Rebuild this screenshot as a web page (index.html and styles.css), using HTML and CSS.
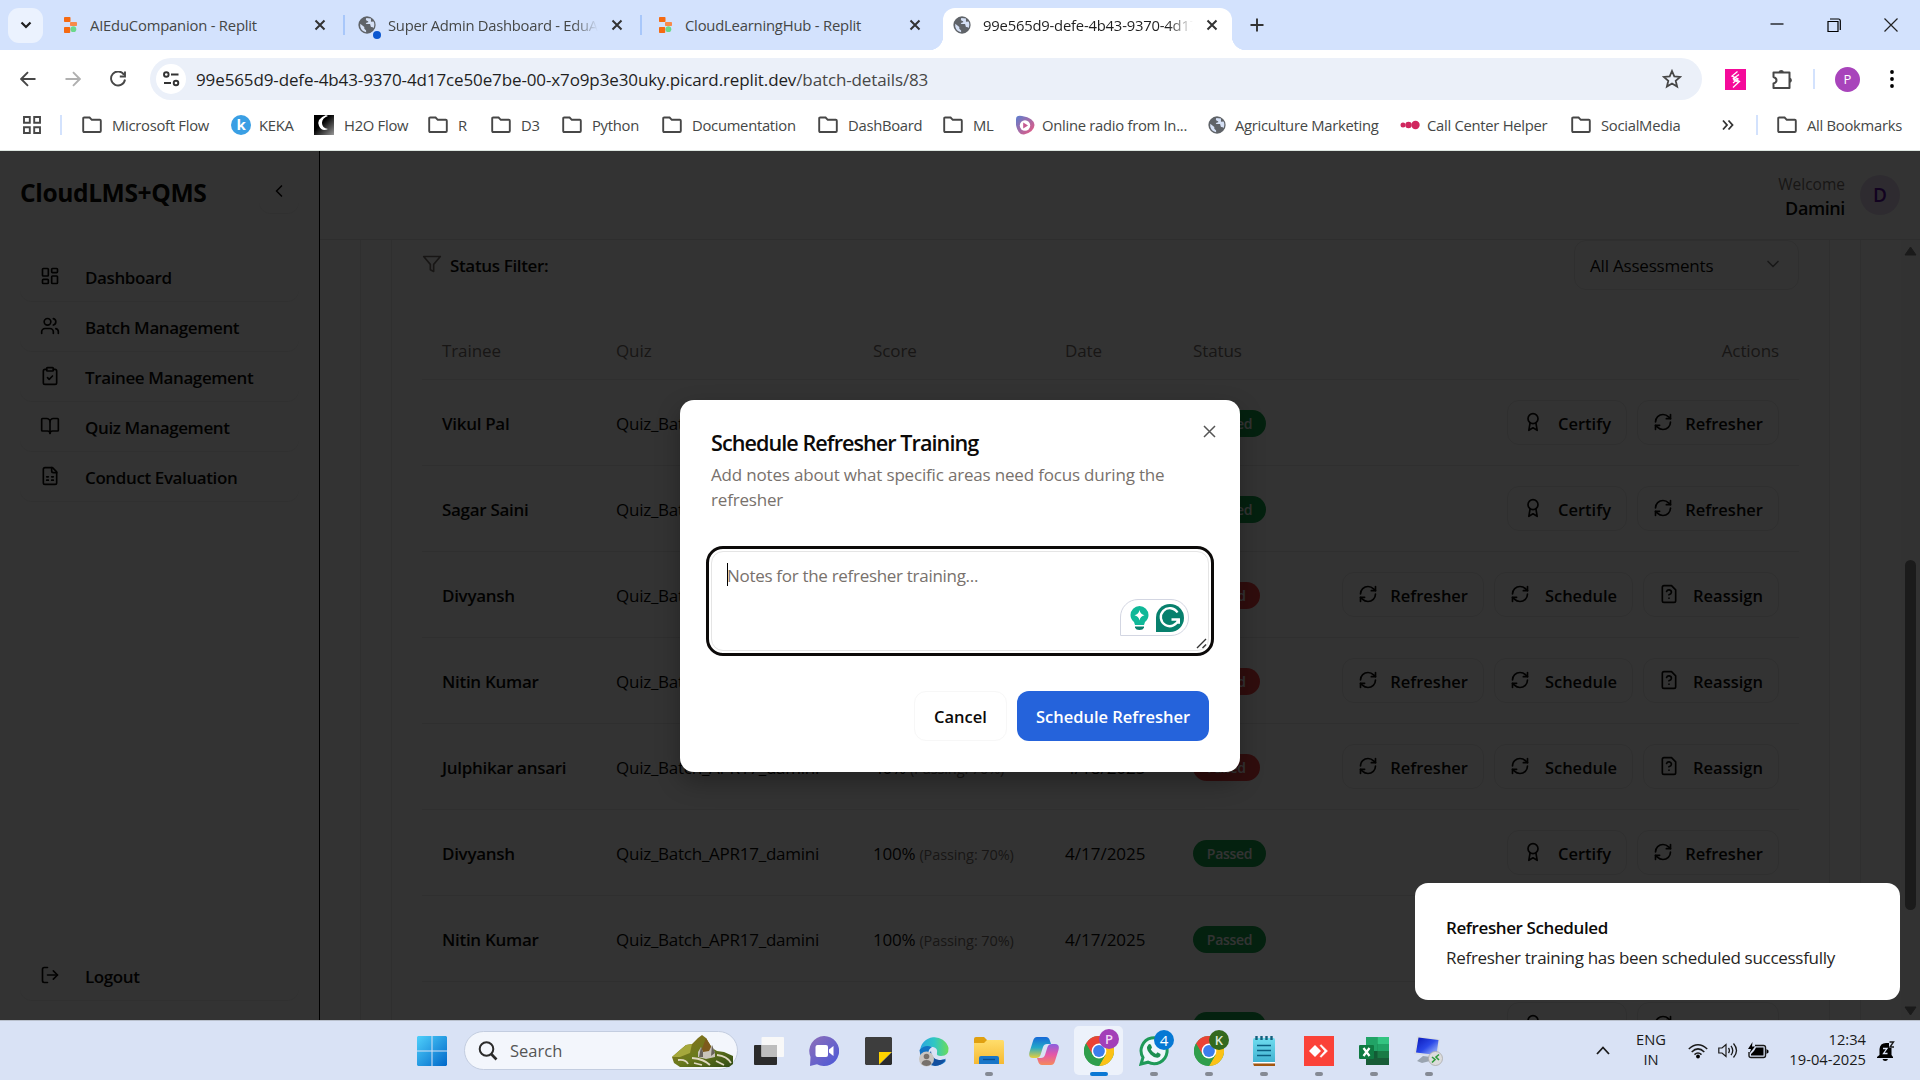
FILE: index.html
```html
<!DOCTYPE html>
<html lang="en">
<head>
<meta charset="utf-8">
<title>CloudLMS+QMS</title>
<link rel="stylesheet" href="styles.css">
</head>
<body>
<svg class="defs" width="0" height="0">
  <defs>
    <linearGradient id="gWin" x1="0" y1="0" x2="1" y2="1"><stop offset="0" stop-color="#4fd0fb"/><stop offset="1" stop-color="#0067c9"/></linearGradient>
    <linearGradient id="gChat" x1="0" y1="0" x2="1" y2="1"><stop offset="0" stop-color="#8f6fb8"/><stop offset="1" stop-color="#4a58d8"/></linearGradient>
    <linearGradient id="gEdge" x1="0" y1="0" x2="1" y2="0"><stop offset="0" stop-color="#2aa5e0"/><stop offset=".5" stop-color="#2fc6c4"/><stop offset="1" stop-color="#6bdc5a"/></linearGradient>
    <linearGradient id="gCoA" x1="0" y1="0" x2="0" y2="1"><stop offset="0" stop-color="#1668d8"/><stop offset=".5" stop-color="#24a8c8"/><stop offset="1" stop-color="#e8cf3a"/></linearGradient>
    <linearGradient id="gCoB" x1="0" y1="0" x2="0" y2="1"><stop offset="0" stop-color="#8a5ee0"/><stop offset=".5" stop-color="#e457a8"/><stop offset="1" stop-color="#f58a5c"/></linearGradient>
    <linearGradient id="gFold" x1="0" y1="0" x2="0" y2="1"><stop offset="0" stop-color="#ffdd6b"/><stop offset="1" stop-color="#f6b932"/></linearGradient>
    <linearGradient id="gNote" x1="0" y1="0" x2="0" y2="1"><stop offset="0" stop-color="#6fdcef"/><stop offset="1" stop-color="#3fb1d0"/></linearGradient>
    <linearGradient id="gRadio" x1="0" y1="0" x2="1" y2="1"><stop offset="0" stop-color="#5a7fd0"/><stop offset="1" stop-color="#f2567c"/></linearGradient>
    <linearGradient id="gScr" x1="0" y1="0" x2="1" y2="1"><stop offset="0" stop-color="#0a18b8"/><stop offset=".5" stop-color="#2a48e8"/><stop offset="1" stop-color="#b8d0fa"/></linearGradient>
    <linearGradient id="gHill" x1="0" y1="0" x2="1" y2="1"><stop offset="0" stop-color="#8f6a1e"/><stop offset=".5" stop-color="#6b7a1c"/><stop offset="1" stop-color="#2f4a14"/></linearGradient>
    <linearGradient id="gH2o" x1="0" y1="0" x2="1" y2="1"><stop offset=".4" stop-color="#000"/><stop offset="1" stop-color="#999"/></linearGradient>
  </defs>
  <symbol id="folder" viewBox="0 0 20 18"><path d="M1.2 2.5Q1.2 1.5 2.2 1.5H7.6L9.8 3.8H17.8Q18.8 3.8 18.8 4.8V15Q18.8 16 17.8 16H2.2Q1.2 16 1.2 15Z" fill="none" stroke="#474747" stroke-width="1.9"/></symbol>
  <symbol id="globe" viewBox="0 0 20 20"><circle cx="10" cy="10" r="9.6" fill="#5f6368"/><path d="M2.5 8.5 7 12.2V14.2L9 16.2V18Q4 17.4 2.5 12Z" fill="#d5e0f5"/><path d="M9.2 2.2Q8 4.2 9.6 5.2 12 5.4 11.4 7 9 7 8.6 9H13.4L14.4 12.2Q16.4 12 17.4 13.4 19 9 17.2 6.2L14.4 6.4V2.8Z" fill="#d5e0f5"/></symbol>
  <symbol id="replit" viewBox="0 0 13 16"><rect width="6.5" height="5" rx=".8" fill="#f56a12"/><rect x="6" y="5" width="7" height="4" rx=".8" fill="#f88a4a"/><rect y="10" width="6.2" height="6" rx=".8" fill="#f56a12"/><circle cx="9.4" cy="12.2" r="2.9" fill="#6bd88c"/></symbol>
  <symbol id="x" viewBox="0 0 12 12"><path d="M1.5 1.5 10.5 10.5M10.5 1.5 1.5 10.5" stroke="currentColor" stroke-width="2" fill="none"/></symbol>
  <symbol id="chrome" viewBox="0 0 30 30"><circle cx="15" cy="15" r="15" fill="#34a853"/><path d="M15 15 2 7.5A15 15 0 0 1 28 7.5H15Z" fill="#ea4335"/><path d="M28 7.5A15 15 0 0 1 15 30L21.5 18.7 15 7.5Z" fill="#fbc116"/><path d="M2 7.5 8.5 18.8 15 15V7.5Z" fill="#ea4335"/><path d="M2 7.5A15 15 0 0 0 15 30L21.5 18.7H8.5Z" fill="#2f9e4c"/><circle cx="15" cy="15" r="7.4" fill="#fff"/><circle cx="15" cy="15" r="5.9" fill="#3b7ded"/></symbol>
  <symbol id="refresh" viewBox="0 0 24 24"><path d="M3 12a9 9 0 0 1 9-9 9.750 9.750 0 0 1 6.740 2.740L21 8"/><path d="M21 3v5h-5"/><path d="M21 12a9 9 0 0 1-9 9 9.750 9.750 0 0 1-6.740-2.740L3 16"/><path d="M8 16H3v5"/></symbol>
  <symbol id="award" viewBox="0 0 24 24"><circle cx="12" cy="8" r="6"/><path d="M15.480 12.890 17 22l-5-3-5 3 1.520-9.110"/></symbol>
  <symbol id="fileq" viewBox="0 0 24 24"><path d="M15 2H6a2 2 0 0 0-2 2v16a2 2 0 0 0 2 2h12a2 2 0 0 0 2-2V7Z"/><path d="M9.100 9a3 3 0 0 1 5.820 1c0 2-3 3-3 3"/><path d="M12 17h.01"/></symbol>
</svg>

<header class="browser">
  <div class="tabs">
    <div class="tabsearch"><svg width="12" height="8" viewBox="0 0 12 8"><path d="M1.500 1.500 6 6 10.500 1.500" stroke="#1f1f1f" stroke-width="2.200" fill="none"/></svg></div>
    <div class="tab t1"><svg class="rep"><use href="#replit"/></svg><span>AIEduCompanion - Replit</span><svg class="cx"><use href="#x"/></svg></div>
    <i class="tsep"></i>
    <div class="tab t2"><svg class="glo"><use href="#globe"/></svg><b class="dot"></b><span class="fade">Super Admin Dashboard - EduAI</span><svg class="cx"><use href="#x"/></svg></div>
    <i class="tsep"></i>
    <div class="tab t3"><svg class="rep"><use href="#replit"/></svg><span>CloudLearningHub - Replit</span><svg class="cx"><use href="#x"/></svg></div>
    <div class="tab active"><svg class="glo"><use href="#globe"/></svg><span class="fade">99e565d9-defe-4b43-9370-4d17c</span><svg class="cx"><use href="#x"/></svg></div>
    <svg class="plus" width="14" height="14" viewBox="0 0 14 14"><path d="M7 .5V13.500M.5 7H13.500" stroke="#333" stroke-width="1.900"/></svg>
    <div class="win">
      <svg width="14" height="14" viewBox="0 0 14 14"><path d="M.5 6H13.500" stroke="#000" stroke-width="1.200"/></svg>
      <svg width="14" height="14" viewBox="0 0 14 14"><path d="M1 3.500H11V13.500H1ZM3 1H11.500Q13.300 1 13.300 3V12" stroke="#000" stroke-width="1.200" fill="none"/></svg>
      <svg width="14" height="14" viewBox="0 0 14 14"><path d="M.5 .5 13.500 13.500M13.500 .5 .5 13.500" stroke="#222" stroke-width="1.200"/></svg>
    </div>
  </div>
  <div class="toolbar">
    <svg class="nv" width="16" height="16" viewBox="0 0 16 16"><path d="M15.500 8H1.500M8 1.200 1.200 8 8 14.800" stroke="#474747" stroke-width="1.900" fill="none"/></svg>
    <svg class="nv" width="16" height="16" viewBox="0 0 16 16"><path d="M.5 8H14.500M8 1.200 14.800 8 8 14.800" stroke="#b0b0b0" stroke-width="1.900" fill="none"/></svg>
    <svg class="nv" width="16" height="16" viewBox="0 0 16 16"><path d="M14 3.700A7 7 0 1 0 15 8.500M15 .5V5.500H9.800" stroke="#474747" stroke-width="1.900" fill="none"/></svg>
    <div class="omni">
      <div class="site"><svg width="17" height="16" viewBox="0 0 17 16"><circle cx="3.300" cy="3.500" r="2.300"/><path d="M8 3.500H15.500M1 12H8"/><circle cx="13" cy="12" r="2.300"/></svg></div>
      <div class="url">99e565d9-defe-4b43-9370-4d17ce50e7be-00-x7o9p3e30uky.picard.replit.dev<em>/batch-details/83</em></div>
      <svg class="star" width="20" height="20" viewBox="0 0 20 20"><path d="M10 2 12.300 7.400 18.200 7.900 13.700 11.800 15.100 17.600 10 14.500 4.900 17.600 6.300 11.800 1.800 7.900 7.700 7.400Z" fill="none" stroke="#474747" stroke-width="1.800"/></svg>
    </div>
    <svg class="ext" width="21" height="21" viewBox="0 0 21 21"><rect width="21" height="21" fill="#f50a9a"/><path d="M12.500 2.500 7 7 13 10 8 14M14 5.500 8.500 9.500 14.500 12.500 8 18.500M8 10.500 13.500 13.500" fill="none" stroke="#fff" stroke-width="1.300"/></svg>
    <svg class="puz" width="22" height="22" viewBox="0 0 22 22"><path d="M2.500 4.500H18.500V20H2.500V15.500Q5.500 14.500 5.500 12.200 5.500 10 2.500 9Z" fill="none" stroke="#474747" stroke-width="2" stroke-linejoin="round"/><path d="M7.500 4.500A2.800 3 0 0 1 13 4.500ZM18.500 9.500A3 2.800 0 0 1 18.500 15Z" fill="#474747"/></svg>
    <i class="vsep"></i>
    <div class="avatar">P</div>
    <svg class="dots" width="6" height="20" viewBox="0 0 6 20"><circle cx="3" cy="3" r="1.900"/><circle cx="3" cy="10" r="1.900"/><circle cx="3" cy="17" r="1.900"/></svg>
  </div>
  <nav class="marks">
    <svg width="18" height="18" viewBox="0 0 18 18"><path d="M1 1H6.800V6.800H1ZM11.200 1H17V6.800H11.200ZM1 11.200H6.800V17H1ZM11.200 11.200H17V17H11.200Z" fill="none" stroke="#474747" stroke-width="1.900"/></svg>
    <i class="vsep"></i>
    <a><svg><use href="#folder"/></svg>Microsoft Flow</a>
    <a class="keka"><b>k</b>KEKA</a>
    <a><svg viewBox="0 0 20 20"><rect width="20" height="20" fill="url(#gH2o)"/><path d="M12 0Q2 4 5 11 8 17 14 14 8 13 8 8 8 3 14 1Z" fill="#fff"/></svg>H2O Flow</a>
    <a><svg><use href="#folder"/></svg>R</a>
    <a><svg><use href="#folder"/></svg>D3</a>
    <a><svg><use href="#folder"/></svg>Python</a>
    <a><svg><use href="#folder"/></svg>Documentation</a>
    <a><svg><use href="#folder"/></svg>DashBoard</a>
    <a><svg><use href="#folder"/></svg>ML</a>
    <a class="near"><svg viewBox="0 0 20 20"><path d="M1 4Q1 0 7 1 19 3 19.500 10 19 17 9 19.500 3 20 1 10Z" fill="url(#gRadio)"/><circle cx="10" cy="10.500" r="5.200" fill="#fff"/><path d="M8.200 7.500 13 10.500 8.200 13.500Z" fill="#c55a92"/></svg>Online radio from In...</a>
    <a class="near"><svg class="g18"><use href="#globe"/></svg>Agriculture Marketing</a>
    <a class="near"><svg viewBox="0 0 20 20"><circle cx="3" cy="10" r="2.500" fill="#d0265e"/><circle cx="8.500" cy="10" r="3.200" fill="#d0265e"/><circle cx="15.500" cy="10" r="4.200" fill="#d0265e"/></svg>Call Center Helper</a>
    <a><svg><use href="#folder"/></svg>SocialMedia</a>
    <svg width="12" height="12" viewBox="0 0 12 12"><path d="M1 1.500 5 6 1 10.500M6.500 1.500 10.500 6 6.500 10.500" fill="none" stroke="#333" stroke-width="1.800"/></svg>
    <i class="vsep"></i>
    <a><svg><use href="#folder"/></svg>All Bookmarks</a>
  </nav>
</header>

<div class="app">
  <aside class="side">
    <div class="brand"><h1>CloudLMS+QMS</h1><button class="fold"><svg class="lu" viewBox="0 0 24 24"><path d="m15 18-6-6 6-6"/></svg></button></div>
    <nav class="menu">
      <a><svg class="lu" viewBox="0 0 24 24"><rect width="7" height="9" x="3" y="3" rx="1"/><rect width="7" height="5" x="14" y="3" rx="1"/><rect width="7" height="9" x="14" y="12" rx="1"/><rect width="7" height="5" x="3" y="16" rx="1"/></svg>Dashboard</a>
      <a><svg class="lu" viewBox="0 0 24 24"><path d="M16 21v-2a4 4 0 0 0-4-4H6a4 4 0 0 0-4 4v2"/><circle cx="9" cy="7" r="4"/><path d="M22 21v-2a4 4 0 0 0-3-3.870"/><path d="M16 3.130a4 4 0 0 1 0 7.750"/></svg>Batch Management</a>
      <a><svg class="lu" viewBox="0 0 24 24"><rect width="8" height="4" x="8" y="2" rx="1"/><path d="M16 4h2a2 2 0 0 1 2 2v14a2 2 0 0 1-2 2H6a2 2 0 0 1-2-2V6a2 2 0 0 1 2-2h2"/><path d="m9 14 2 2 4-4"/></svg>Trainee Management</a>
      <a><svg class="lu" viewBox="0 0 24 24"><path d="M12 7v14"/><path d="M3 18a1 1 0 0 1-1-1V4a1 1 0 0 1 1-1h5a4 4 0 0 1 4 4 4 4 0 0 1 4-4h5a1 1 0 0 1 1 1v13a1 1 0 0 1-1 1h-6a3 3 0 0 0-3 3 3 3 0 0 0-3-3z"/></svg>Quiz Management</a>
      <a><svg class="lu" viewBox="0 0 24 24"><path d="M15 2H6a2 2 0 0 0-2 2v16a2 2 0 0 0 2 2h12a2 2 0 0 0 2-2V7Z"/><path d="M14 2v4a2 2 0 0 0 2 2h4"/><path d="M8 13h2M14 13h2M8 17h2M14 17h2"/></svg>Conduct Evaluation</a>
    </nav>
    <nav class="menu out"><a><svg class="lu" viewBox="0 0 24 24"><path d="M9 21H5a2 2 0 0 1-2-2V5a2 2 0 0 1 2-2h4"/><path d="m16 17 5-5-5-5"/><path d="M21 12H9"/></svg>Logout</a></nav>
  </aside>
  <section class="main">
    <div class="top"><div class="who"><small>Welcome</small><strong>Damini</strong></div><div class="me">D</div></div>
    <div class="scroll">
      <div class="outer"><div class="inner">
        <div class="filter"><svg class="lu mut" viewBox="0 0 24 24"><path d="M22 3H2l8 9.460V19l4 2v-8.540z"/></svg><span>Status Filter:</span><div class="select">All Assessments<svg class="lu" viewBox="0 0 24 24"><path d="m6 9 6 6 6-6"/></svg></div></div>
        <div class="row head"><span>Trainee</span><span>Quiz</span><span>Score</span><span>Date</span><span>Status</span><span class="end">Actions</span></div>
        <div class="row"><b>Vikul Pal</b><span>Quiz_Batch_APR17_damini</span><span>100% <small>(Passing: 70%)</small></span><span class="date">4/17/2025</span><span><i class="pill ok">Passed</i></span><div class="acts"><button class="cert"><svg class="lu"><use href="#award"/></svg>Certify</button><button class="refr"><svg class="lu"><use href="#refresh"/></svg>Refresher</button></div></div>
        <div class="row"><b>Sagar Saini</b><span>Quiz_Batch_APR17_damini</span><span>100% <small>(Passing: 70%)</small></span><span class="date">4/17/2025</span><span><i class="pill ok">Passed</i></span><div class="acts"><button class="cert"><svg class="lu"><use href="#award"/></svg>Certify</button><button class="refr"><svg class="lu"><use href="#refresh"/></svg>Refresher</button></div></div>
        <div class="row"><b>Divyansh</b><span>Quiz_Batch_APR17_damini</span><span>40% <small>(Passing: 70%)</small></span><span class="date">4/18/2025</span><span><i class="pill bad">Failed</i></span><div class="acts"><button class="refr"><svg class="lu"><use href="#refresh"/></svg>Refresher</button><button class="sch"><svg class="lu"><use href="#refresh"/></svg>Schedule</button><button class="rea"><svg class="lu"><use href="#fileq"/></svg>Reassign</button></div></div>
        <div class="row"><b>Nitin Kumar</b><span>Quiz_Batch_APR17_damini</span><span>40% <small>(Passing: 70%)</small></span><span class="date">4/18/2025</span><span><i class="pill bad">Failed</i></span><div class="acts"><button class="refr"><svg class="lu"><use href="#refresh"/></svg>Refresher</button><button class="sch"><svg class="lu"><use href="#refresh"/></svg>Schedule</button><button class="rea"><svg class="lu"><use href="#fileq"/></svg>Reassign</button></div></div>
        <div class="row"><b>Julphikar ansari</b><span>Quiz_Batch_APR17_damini</span><span>40% <small>(Passing: 70%)</small></span><span class="date">4/18/2025</span><span><i class="pill bad">Failed</i></span><div class="acts"><button class="refr"><svg class="lu"><use href="#refresh"/></svg>Refresher</button><button class="sch"><svg class="lu"><use href="#refresh"/></svg>Schedule</button><button class="rea"><svg class="lu"><use href="#fileq"/></svg>Reassign</button></div></div>
        <div class="row"><b>Divyansh</b><span>Quiz_Batch_APR17_damini</span><span>100% <small>(Passing: 70%)</small></span><span class="date">4/17/2025</span><span><i class="pill ok">Passed</i></span><div class="acts"><button class="cert"><svg class="lu"><use href="#award"/></svg>Certify</button><button class="refr"><svg class="lu"><use href="#refresh"/></svg>Refresher</button></div></div>
        <div class="row"><b>Nitin Kumar</b><span>Quiz_Batch_APR17_damini</span><span>100% <small>(Passing: 70%)</small></span><span class="date">4/17/2025</span><span><i class="pill ok">Passed</i></span><div class="acts"><button class="cert"><svg class="lu"><use href="#award"/></svg>Certify</button><button class="refr"><svg class="lu"><use href="#refresh"/></svg>Refresher</button></div></div>
        <div class="row"><b>Julphikar ansari</b><span>Quiz_Batch_APR17_damini</span><span>100% <small>(Passing: 70%)</small></span><span class="date">4/17/2025</span><span><i class="pill ok">Passed</i></span><div class="acts"><button class="cert"><svg class="lu"><use href="#award"/></svg>Certify</button><button class="refr"><svg class="lu"><use href="#refresh"/></svg>Refresher</button></div></div>
      </div></div>
      <div class="bar"><svg width="13" height="10" viewBox="0 0 13 10"><path d="M6.500 1 12 9H1Z" fill="#808080" stroke="#808080" stroke-linejoin="round"/></svg><i></i><svg width="13" height="10" viewBox="0 0 13 10"><path d="M6.500 9 12 1H1Z" fill="#808080" stroke="#808080" stroke-linejoin="round"/></svg></div>
    </div>
  </section>

  <div class="overlay"></div>
  <div class="modal">
    <svg class="close" width="13" height="13" viewBox="0 0 13 13"><path d="M1 1 12 12M12 1 1 12" stroke="#555" stroke-width="1.500"/></svg>
    <h2>Schedule Refresher Training</h2>
    <p>Add notes about what specific areas need focus during the<br>refresher</p>
    <div class="area"><i class="caret"></i><span>Notes for the refresher training...</span>
      <div class="gram">
        <svg width="19" height="24" viewBox="0 0 19 24"><path d="M9.500 0A9 9 0 0 1 18.500 9Q18.500 13 15 16L14 19H5L4 16Q.5 13 .5 9A9 9 0 0 1 9.500 0Z" fill="#0fb898"/><path d="M5 20.500H14V21.500Q13 24 9.500 24 6 24 5 21.500Z" fill="#0a7f6c"/><path d="M9.500 4Q10.300 8.400 14.500 9.200 10.300 10 9.500 14.500 8.700 10 4.500 9.200 8.700 8.400 9.500 4Z" fill="#fff"/></svg>
        <svg width="28" height="28" viewBox="0 0 28 28"><path d="M14 0A14 14 0 0 1 14 28H0V14A14 14 0 0 1 14 0Z" fill="#07806d"/><path d="M21.500 8.500A9 9 0 1 0 22.500 15.500H15.500M22.800 15V19.800" fill="none" stroke="#fff" stroke-width="2.400"/></svg>
      </div>
      <svg class="grip" width="11" height="11" viewBox="0 0 11 11"><path d="M1 10 10 1M6.500 10 10 6.500" stroke="#333" stroke-width="1.400"/></svg>
    </div>
    <div class="foot"><button class="cancel">Cancel</button><button class="go">Schedule Refresher</button></div>
  </div>
  <div class="toast"><strong>Refresher Scheduled</strong><span>Refresher training has been scheduled successfully</span></div>
</div>

<footer class="task">
  <div class="cell"><svg width="30" height="30" viewBox="0 0 30 30"><path d="M1 0H14.500V14.500H0V1ZM15.500 0H29L30 1V14.500H15.500ZM0 15.500H14.500V30H1L0 29ZM15.500 15.500H30V29L29 30H15.500Z" fill="url(#gWin)"/></svg></div>
  <div class="find"><svg width="20" height="20" viewBox="0 0 20 20"><circle cx="8.500" cy="8" r="6.800" fill="none" stroke="#2b2b2b" stroke-width="2"/><path d="M13.200 13 18.500 18.500" stroke="#2b2b2b" stroke-width="2.600"/></svg><span>Search</span>
    <svg class="land" width="62" height="32" viewBox="0 0 62 32"><path d="M2 28 0 22 8 15 14 10 20 9 26 3 30 0 34 3 40 13 45 16 52 17 61 21V29L57 32H8Z" fill="url(#gHill)"/><path d="M14 10 20 9 18 18 8 22 0 22 8 15Z" fill="#a5a83c"/><path d="M34 3 40 13 36 21 28 19Z" fill="#7d5a1c"/><path d="M26 22V17L29 12 31 17 37 16 40 10 43 18V22L34 24Z" fill="#c9c4ba"/><path d="M29 12 31 17V22L27 22ZM40 10 43 18 39 21Z" fill="#68635c"/><path d="M6 25Q14 24 16 29M20 23Q32 24 38 30M45 20Q55 21 59 28M22 28 30 30M44 26 52 30" stroke="#dfd8c0" stroke-width="1.800" fill="none"/></svg></div>
  <div class="cell first"><svg width="30" height="28" viewBox="0 0 30 28"><rect y="8" width="23" height="20" rx="1" fill="#2b2b2b"/><rect x="7.500" width="22.500" height="20" rx="1" fill="#f8f8f8"/><rect x="7.500" y="8" width="15.500" height="12" fill="#bdbdbd"/></svg></div>
  <div class="cell"><svg width="30" height="30" viewBox="0 0 30 30"><path d="M15 0A15 15 0 1 1 8 28.200L1 30 1.500 21A15 15 0 0 1 15 0Z" fill="url(#gChat)"/><rect x="6.500" y="9" width="12.500" height="12" rx="2" fill="#fff"/><path d="M20 13.500 24.500 10V20L20 16.500Z" fill="#fff"/></svg></div>
  <div class="cell"><svg width="27" height="28" viewBox="0 0 27 28"><path d="M1 0H26L27 1V14.500L14 28H1L0 27V1Z" fill="#3d3d3d"/><path d="M14 15H27L14 27.500Z" fill="#ffd400"/><path d="M27 15V27L26 28H14Z" fill="#2b2b2b"/></svg></div>
  <div class="cell"><svg width="32" height="32" viewBox="0 0 32 32"><path d="M2 16A14.500 14.500 0 0 1 30.500 13Q31 21 23 21 18 21 19 18 20 13 15 12 6 11 2 16Z" fill="url(#gEdge)"/><path d="M1.500 15Q7 9 14 12 9 15 11 21 14 28 25 24.500 29 24 27 27 20 33 11 29.500 2 26 1.500 15Z" fill="#1273c4"/><path d="M13 16Q13 24 21 25 26 25 28 23.500 25 30 17 31 10 29 10.500 20Z" fill="#124f9e"/><circle cx="8.500" cy="24" r="7.500" fill="#c9c5c1"/><circle cx="8.500" cy="21.500" r="2.800" fill="#77716c"/><path d="M3.500 29Q4 25 8.500 25T13.500 29Q8.500 33 3.500 29Z" fill="#77716c"/></svg></div>
  <div class="cell run"><svg width="30" height="27" viewBox="0 0 30 27"><path d="M0 2Q0 0 2 0H10L13 3V8H0Z" fill="#e0a010"/><path d="M0 6 10 6 13 3H28.500Q30 3 30 5V27H0Z" fill="url(#gFold)"/><path d="M5 27V21Q5 19 7 19H23Q25 19 25 21V27Z" fill="#1976c8"/><path d="M9 22.500H21" stroke="#0b4f90" stroke-width="1.300"/></svg></div>
  <div class="cell"><svg width="30" height="28" viewBox="0 0 30 28"><path d="M8 0H17Q20 0 21 4L22 7H18Q15 7 14 10L11.500 18Q10.500 21 7 21H4Q-1 21 .5 15L4 4Q5 0 8 0Z" fill="url(#gCoA)"/><path d="M22 28H13Q10 28 9 24L8 21H12Q15 21 16 18L18.500 10Q19.500 7 23 7H26Q31 7 29.500 13L26 24Q25 28 22 28Z" fill="url(#gCoB)"/></svg></div>
  <div class="cell run on"><svg width="30" height="30"><use href="#chrome"/></svg><b class="bdg">P</b></div>
  <div class="cell run"><svg width="30" height="30" viewBox="0 0 30 30"><path d="M2 28 4 21.500A13 13 0 1 1 9 26.200Z" fill="#eef6fb" stroke="#1f9a58" stroke-width="3"/><path d="M9.500 8.500Q11 7.500 12 9L13 11.500 11.800 13.500Q13.500 16.500 17 18L18.500 16.300 21.500 18Q22 21 18.500 21.800 15 22 11.500 18.500 7.500 14 8 11Z" fill="#1b8f50"/></svg><b class="bdg four">4</b></div>
  <div class="cell run"><svg width="30" height="30"><use href="#chrome"/></svg><b class="bdg kk">K</b></div>
  <div class="cell run"><svg width="22" height="30" viewBox="0 0 22 30"><rect y="2" width="22" height="25" rx="1.500" fill="url(#gNote)"/><path d="M0 26H22V27.500H0Z" fill="#fff"/><path d="M0 27.500H22V30H1Z" fill="#a3560f"/><path d="M4 9.500H18M4 14.500H18M4 19.500H18" stroke="#0c5f82" stroke-width="1.600"/><path d="M3.500 0V4M8.500 0V4M13.500 0V4M18.500 0V4" stroke="#14607c" stroke-width="2.400"/></svg></div>
  <div class="cell run"><svg width="30" height="30" viewBox="0 0 30 30"><rect width="30" height="30" fill="#fb4238"/><path d="M5 15 11 9 17 15 11 21Z" fill="#fff"/><path d="M16 9.500 17.200 8.800 23.500 15 17.200 21.200 16 20.500 20.800 15Z" fill="#fff" stroke="#fff" stroke-width=".6"/></svg></div>
  <div class="cell run"><svg width="30" height="28" viewBox="0 0 30 28"><rect x="7" width="23" height="28" rx="1.500" fill="#1a7a45"/><path d="M7 0H18.500V14H7Z" fill="#21a366"/><path d="M18.500 0H30V7H18.500Z" fill="#33c481"/><path d="M18.500 7H30V14H18.500Z" fill="#21a366"/><path d="M7 14H18.500V21H7Z" fill="#125c35"/><path d="M18.500 21H30V28H7V21Z" fill="#185c37"/><rect y="8" width="15" height="14" rx="1" fill="#0f7a42"/><path d="M4.500 11 10.500 19M10.500 11 4.500 19" stroke="#fff" stroke-width="2.200"/></svg></div>
  <div class="cell run"><svg width="30" height="30" viewBox="0 0 30 30"><path d="M3 0 26 3 24 21 0 18Z" fill="#d8dde4"/><path d="M4.500 1.500 24.500 4 22.500 19 2 16.500Z" fill="url(#gScr)"/><path d="M9 20 17 21 16 25 8 27 3 25Z" fill="#9aa4b0"/><circle cx="21.500" cy="22.500" r="7" fill="#dcdcdc" stroke="#a9a9a9" stroke-width=".8"/><path d="M18 21 21 23.500 18 26.500M25 18.500 22 21 25 24" fill="none" stroke="#2f9a3c" stroke-width="1.600"/></svg></div>
  <div class="tray">
    <svg width="14" height="9" viewBox="0 0 14 9"><path d="M1 8 7 1.500 13 8" fill="none" stroke="#1a1a1a" stroke-width="1.800"/></svg>
    <div class="lang">ENG<br>IN</div>
    <svg width="20" height="16" viewBox="0 0 20 16"><path d="M.8 6Q10-2.500 19.200 6M3.700 9Q10 2.800 16.300 9M6.500 11.600Q10 8.300 13.500 11.600" fill="none" stroke="#1a1a1a" stroke-width="1.500"/><circle cx="10" cy="13.500" r="1.900"/></svg>
    <svg width="20" height="17" viewBox="0 0 20 17"><path d="M.8 6H4L8 2.500V14.500L4 11H.8Z" fill="none" stroke="#1a1a1a" stroke-width="1.200"/><path d="M10.500 6Q12.300 8.500 10.500 11M13 3.800Q16.500 8.500 13 13.200M15.500 1.500Q21.500 8.500 15.500 15.500" fill="none" stroke="#1a1a1a" stroke-width="1.300"/></svg>
    <svg width="21" height="17" viewBox="0 0 21 17"><path d="M7 3.500H15.500Q17.500 3.500 17.500 5.500V13.500Q17.500 15.500 15.500 15.500H3Q1 15.500 1 13.500V10" fill="none" stroke="#1a1a1a" stroke-width="1.400"/><path d="M8 5.500H15.500V13.500H3V12L6 9Z"/><path d="M18.500 7 20.500 8.500V10.500L18.500 12ZM4.500 0 0 7H3L1.500 11.500 7 4.500H4Z"/></svg>
    <div class="clock">12:34<br>19-04-2025</div>
    <svg width="18" height="20" viewBox="0 0 18 20"><path d="M2.500 14V8Q3 2 9 2H12V7H14.500V14L16 16V17H0V16ZM5.500 18H11Q10.500 20 8.200 20 6 20 5.500 18Z"/><path d="M6 7.500H10L6.500 12.500H10.500" fill="none" stroke="#dbe4f6" stroke-width="1.300"/><path d="M12.500 1H16.500L13 6H17" fill="none" stroke="#1a1a1a" stroke-width="1.400"/></svg>
  </div>
</footer>
</body>
</html>
```
FILE: styles.css
```css
* { box-sizing: border-box; margin: 0; padding: 0; }
body { width: 1920px; height: 1080px; overflow: hidden; background: #fff; color: #0c0a09; font-family: "Open Sans", "Noto Sans", sans-serif; font-size: 17px; display: flex; flex-direction: column; }
svg { flex: none; display: block; }
button { font: inherit; color: inherit; background: none; border: 0; }
i, em { font-style: normal; }
.defs { position: absolute; }

/* browser chrome */
.browser { height: 151px; flex: none; background: #fff; border-bottom: 1px solid #dde5e0; color: #454746; }
.tabs { height: 50px; padding: 8px 0 8px 8px; display: flex; align-items: center; background: #d3e2fd; }
.tabsearch { width: 35px; height: 35px; border-radius: 11px; background: #ebf2fe; display: grid; place-items: center; }
.tab { height: 34px; display: flex; align-items: center; white-space: nowrap; position: relative; font-size: 14.8px; letter-spacing: -.2px; }
.tab span { flex: 1; overflow: hidden; line-height: 24px; }
.rep { width: 13px; height: 16px; margin-right: 13px; }
.glo { width: 18px; height: 18px; margin-right: 12px; }
.cx { width: 12px; height: 12px; color: #333; }
.fade { -webkit-mask-image: linear-gradient(90deg, #000 88%, transparent 100%); mask-image: linear-gradient(90deg, #000 88%, transparent 100%); margin-right: 13px; }
.t2 .fade { letter-spacing: -.28px; }
.dot { position: absolute; left: 28px; top: 23px; width: 8px; height: 8px; border-radius: 50%; background: #0b57d0; }
.t1 { width: 300px; padding: 0 17px 0 21px; }
.t2 { width: 295px; padding: 0 17px 0 13px; }
.t3 { width: 300px; padding: 0 21px 0 17px; }
.tsep { width: 2px; height: 20px; background: #a8c7fa; }
.active { width: 289px; height: 42px; margin: 0 0 -8px 1px; align-self: flex-start; background: #fff; border-radius: 12px 12px 0 0; padding: 0 14px 8px 10px; color: #1f1f1f; }
.active::before, .active::after { content: ""; position: absolute; bottom: 0; width: 14px; height: 14px; background: radial-gradient(circle at 0 0, #d3e2fd 14px, #fff 14.500px); }
.active::before { left: -14px; }
.active::after { right: -14px; background: radial-gradient(circle at 100% 0, #d3e2fd 14px, #fff 14.500px); }
.plus { margin: 0 0 0 18px; }
.win { margin-left: auto; padding-right: 22px; display: flex; gap: 43px; margin-top: -1px; }
.toolbar { height: 58px; display: flex; align-items: center; position: relative; padding: 0 24px 0 20px; }
.nv { margin-right: 29px; }
.nv:nth-child(3) { margin-right: 24px; }
.omni { width: 1552px; height: 42px; border-radius: 21px; background: #ebf0f9; display: flex; align-items: center; padding: 0 20px 0 6px; color: #1f1f1f; }
.site { width: 30px; height: 30px; border-radius: 50%; background: #fff; display: grid; place-items: center; }
.site svg { fill: none; stroke: #333; stroke-width: 1.900; }
.url { flex: 1; margin-left: 10px; font-size: 17px; letter-spacing: -.12px; white-space: nowrap; }
.url em { color: #474747; }
.ext { margin-left: 23px; }
.puz { margin-left: 25px; }
.toolbar .vsep { margin-left: 20px; }
.vsep { width: 2px; height: 20px; background: #d3e2fd; }
.avatar { width: 25px; height: 25px; border-radius: 50%; background: #a844bb; color: #fff; font-size: 13px; display: grid; place-items: center; margin-left: 20px; }
.dots { margin-left: 29px; }
.marks { height: 33px; display: grid; align-items: center; grid-template-columns: 37px 22px 149px 83px 114px 63px 71px 100px 156px 125px 72px 193px 192px 171px 151px 34px 21px auto; padding-left: 23px; }
.marks a { display: flex; align-items: center; gap: 10px; white-space: nowrap; font-size: 14.8px; letter-spacing: -.28px; }
.marks a svg { width: 20px; height: 20px; }
.marks a:has(use[href="#folder"]) svg { height: 18px; }
.marks .near { gap: 7px; }
.marks .g18 { width: 18px; height: 18px; margin-right: 2px; }
.keka b { width: 20px; height: 20px; border-radius: 50%; background: #3a9fe4; color: #fff; font-size: 15px; line-height: 18px; text-align: center; }
.marks .keka { gap: 8px; }

/* application */
.app { height: 869px; flex: none; position: relative; display: flex; background: #fff; overflow: hidden; }
.lu { width: 20px; height: 20px; fill: none; stroke: currentColor; stroke-width: 2; stroke-linecap: round; stroke-linejoin: round; }
.side { width: 320px; border-right: 1px solid #000; padding: 16px 20px 20px; display: flex; flex-direction: column; font-weight: 600; }
.brand { display: flex; align-items: center; justify-content: space-between; height: 50px; }
.brand h1 { font-size: 24.6px; letter-spacing: -.4px; padding-top: 1px; font-weight: 700; }
.fold { width: 40px; height: 45px; margin-top: -3px; border-radius: 12px; display: grid; place-items: center; box-shadow: 0 1px 1px #eee; }
.menu { margin-top: 34px; letter-spacing: -.39px; }
.menu a { height: 50px; border-radius: 12px; padding: 2px 20px 0; gap: 25px; display: flex; align-items: center; box-shadow: 0 1px 1px #eee; }
.menu svg { margin-top: -3px; }
.out { margin-top: auto; }
.main { flex: 1; display: flex; flex-direction: column; }
.top { height: 89px; flex: none; border-bottom: 1px solid #e5e5e5; display: flex; align-items: center; justify-content: flex-end; gap: 15px; padding-right: 20px; }
.who { text-align: right; display: flex; flex-direction: column; line-height: 24px; padding-top: 2px; }
.who small { font-size: 15.5px; color: #78716c; }
.who strong { font-size: 18px; font-weight: 600; letter-spacing: -.4px; }
.me { width: 40px; height: 40px; border-radius: 50%; background: #e4d8ee; color: #5b0a9e; display: grid; place-items: center; font-size: 19px; font-weight: 600; }
.scroll { height: 780px; display: flex; padding-left: 40px; overflow: hidden; }
.outer { width: 1501px; height: 900px; border: solid #e9e9e9; border-width: 0 1px; padding: 0 30px; }
.inner { border: solid #e9e9e9; border-width: 0 1px; padding: 0 30px; height: 900px; }
.bar { margin-left: 40px; width: 19px; height: 780px; background: #f8f8f8; padding: 6px 0 4px; display: flex; flex-direction: column; align-items: center; }
.bar i { width: 11px; height: 350px; border-radius: 6px; background: #858585; margin: 304px 0 auto; }
.filter { height: 50px; display: flex; align-items: center; font-weight: 600; letter-spacing: -.35px; gap: 8px; }
.mut { color: #78716c; }
.filter > svg { margin-top: -2px; }
.select { margin-left: auto; width: 225px; height: 50px; border: 1px solid #e9e9e9; border-radius: 12px; display: flex; justify-content: space-between; align-items: center; padding: 0 15px; font-weight: 400; letter-spacing: -.2px; }
.select svg { color: #777; margin-top: -2px; }
.row { height: 86px; border-bottom: 1px solid #e9e9e9; display: grid; grid-template-columns: 174px 257px 192px 128px 100px 1fr; align-items: center; padding: 0 20px; white-space: nowrap; letter-spacing: -.25px; }
.row > span, .row > b { padding-top: 2px; }
.head { height: 60px; margin-top: 30px; color: #78716c; font-weight: 500; letter-spacing: -.1px; }
.end { text-align: right; }
.row b { font-weight: 600; letter-spacing: -.3px; }
.row small { font-size: 14.5px; color: #78716c; letter-spacing: -.1px; }
.row .date { letter-spacing: 0; }
.pill { display: block; height: 27px; border-radius: 14px; font-size: 14px; font-weight: 600; line-height: 27px; letter-spacing: -.3px; color: #fff; text-align: center; }
.ok { width: 73px; background: #16a34a; }
.bad { width: 67px; background: #ef4444; }
.acts { display: flex; justify-content: flex-end; gap: 10px; font-size: 16.5px; font-weight: 600; letter-spacing: -.5px; }
.acts button { height: 45px; border: 1px solid #e9e9e9; border-radius: 12px; display: flex; align-items: center; justify-content: space-between; padding: 1px 15px 0; }
.acts svg { margin-top: -2px; }
.cert { width: 120px; }
.refr { width: 142px; }
.sch { width: 139px; }
.rea { width: 136px; }
.overlay { position: absolute; inset: 0; background: rgba(0, 0, 0, .8); }
.modal { position: absolute; left: 680px; top: 249px; width: 560px; height: 372px; background: #fff; border-radius: 14px; padding: 31px; box-shadow: 0 10px 25px rgba(0, 0, 0, .3); }
.close { position: absolute; right: 24px; top: 25px; }
.modal h2 { font-size: 21.6px; line-height: 24px; font-weight: 600; letter-spacing: -.95px; }
.modal p { color: #78716c; line-height: 25px; margin-top: 7px; letter-spacing: -.18px; }
.area { position: relative; margin: 39px 0 0; height: 100px; border: 1px solid #e5e5e5; border-radius: 12px; outline: 3px solid #0c0a09; outline-offset: 2px; padding: 11px 15px; color: #78716c; }
.area span { letter-spacing: -.3px; line-height: 26px; }
.caret { position: absolute; left: 15px; top: 11px; width: 1px; height: 23px; background: #000; }
.gram { position: absolute; right: 19px; top: 47px; width: 69px; height: 37px; border: 1px solid #d3d6e2; border-radius: 18px 18px 18px 0; background: #fff; display: flex; align-items: center; gap: 7px; padding-left: 9px; }
.grip { position: absolute; right: 1px; bottom: 1px; }
.foot { display: flex; justify-content: flex-end; gap: 10px; margin-top: 40px; font-size: 16.5px; font-weight: 600; letter-spacing: -.5px; }
.foot button { height: 50px; border-radius: 12px; }
.cancel { width: 93px; border: 1px solid #f7f7f7; }
.go { width: 192px; background: #2563db; color: #fff; }
.toast { position: absolute; left: 1415px; top: 732px; width: 485px; height: 117px; border-radius: 13px; background: #fff; padding: 32px 31px 30px; display: flex; flex-direction: column; gap: 5px; line-height: 25px; white-space: nowrap; }
.toast strong { font-weight: 600; letter-spacing: -.4px; }
.toast span { color: #262423; letter-spacing: -.29px; }

/* taskbar */
.task { height: 60px; background: #d9e2f5; border-top: 1px solid #b9c0cc; display: flex; align-items: center; padding: 0 25px 0 404px; color: #1a1a1a; }
.cell { width: 55px; height: 58px; display: grid; place-items: center; position: relative; }
.first { margin-left: 3px; }
.find { width: 274px; height: 39px; margin-left: 5px; border-radius: 20px; background: #f3f6fc; border: 1px solid #c3cde0; display: flex; align-items: center; padding-left: 13px; color: #555; font-size: 16.5px; }
.find span { margin-left: 12px; }
.land { margin: 0 3px 0 auto; }
.run::after { content: ""; position: absolute; left: 24px; bottom: 4px; width: 8px; height: 4px; border-radius: 2px; background: #858a94; }
.on { background: #edf2fb; width: 49px; height: 49px; border-radius: 5px; margin: 0 3px; }
.on::after { width: 18px; left: 16px; bottom: -1px; background: #0b78d4; }
.bdg { position: absolute; left: 28px; top: 8px; width: 20px; height: 20px; border-radius: 50%; background: #a33fb8; color: #f0d8f5; font-size: 13px; line-height: 20px; text-align: center; font-weight: 600; }
.on .bdg { left: 25px; top: 3px; }
.four { background: #0678d4; color: #fff; font-size: 15px; font-weight: 400; }
.kk { background: #33691e; color: #dfe8d8; }
.tray { margin-left: auto; display: flex; align-items: center; font-size: 14.7px; line-height: 20px; letter-spacing: 0; }
.lang { text-align: center; width: 40px; margin: -3px 17px 0 21px; }
.tray svg + svg { margin-left: 10px; }
.clock { text-align: right; width: 88px; margin: -3px 11px 0 9px; }
```
